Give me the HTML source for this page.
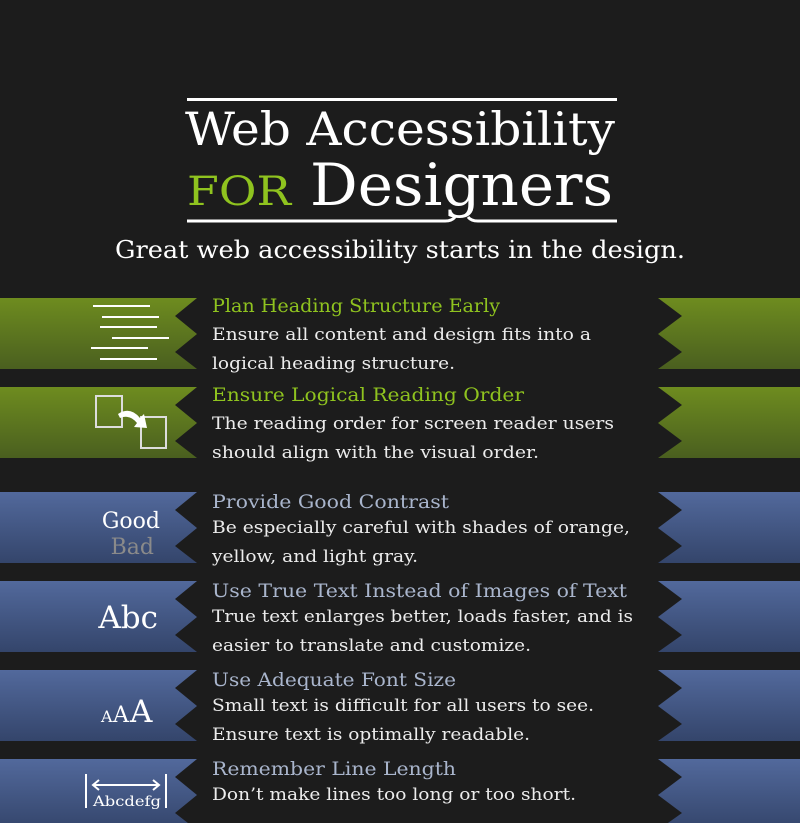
<!DOCTYPE html>
<html><head><meta charset="utf-8"><style>
html,body{margin:0;padding:0;background:#1c1c1c;}
svg{display:block;}
text{font-family:"DejaVu Serif","Liberation Serif",serif;}
.t{font-family:"Liberation Serif",serif;}
</style></head><body>
<svg width="800" height="823" viewBox="0 0 800 823" xmlns="http://www.w3.org/2000/svg">
<defs>
<linearGradient id="g" x1="0" y1="0" x2="0" y2="1"><stop offset="0" stop-color="#6e8c1f"/><stop offset="1" stop-color="#4a5f1f"/></linearGradient>
<linearGradient id="b" x1="0" y1="0" x2="0" y2="1"><stop offset="0" stop-color="#52699c"/><stop offset="1" stop-color="#34456b"/></linearGradient>
</defs>
<rect width="800" height="823" fill="#1c1c1c"/>

<!-- title -->
<rect x="187" y="98" width="430" height="3" fill="#fff"/>
<text x="185" y="145" font-size="46" fill="#fff" textLength="430" lengthAdjust="spacingAndGlyphs">Web Accessibility</text>
<text x="187" y="205" font-size="40" fill="#8fc31f" textLength="104" lengthAdjust="spacingAndGlyphs">FOR</text>
<text x="310" y="205" font-size="58" fill="#fff" textLength="303" lengthAdjust="spacingAndGlyphs">Designers</text>
<path d="M187 221 H445 Q452 221 455 217 M468 217 Q471 221 478 221 H617" stroke="#fff" stroke-width="3" fill="none"/>
<text x="115" y="258" font-size="24" fill="#fff" textLength="570" lengthAdjust="spacingAndGlyphs">Great web accessibility starts in the design.</text>

<!-- ribbons -->
<polygon points="0,298 197,298 175,316 197,334 175,352 197,369 0,369" fill="url(#g)"/>
<polygon points="658,298 800,298 800,369 658,369 682,352 658,334 682,316" fill="url(#g)"/>
<polygon points="0,387 197,387 175,405 197,423 175,441 197,458 0,458" fill="url(#g)"/>
<polygon points="658,387 800,387 800,458 658,458 682,441 658,423 682,405" fill="url(#g)"/>
<polygon points="0,492 197,492 175,510 197,528 175,546 197,563 0,563" fill="url(#b)"/>
<polygon points="658,492 800,492 800,563 658,563 682,546 658,528 682,510" fill="url(#b)"/>
<polygon points="0,581 197,581 175,599 197,617 175,635 197,652 0,652" fill="url(#b)"/>
<polygon points="658,581 800,581 800,652 658,652 682,635 658,617 682,599" fill="url(#b)"/>
<polygon points="0,670 197,670 175,688 197,706 175,724 197,741 0,741" fill="url(#b)"/>
<polygon points="658,670 800,670 800,741 658,741 682,724 658,706 682,688" fill="url(#b)"/>
<polygon points="0,759 197,759 175,777 197,795 175,813 197,830 0,830" fill="url(#b)"/>
<polygon points="658,759 800,759 800,830 658,830 682,813 658,795 682,777" fill="url(#b)"/>

<!-- icons -->
<g stroke="#fff" stroke-width="2">
<line x1="93" y1="306" x2="150" y2="306"/>
<line x1="102" y1="317" x2="159" y2="317"/>
<line x1="100" y1="327" x2="157" y2="327"/>
<line x1="112" y1="338" x2="169" y2="338"/>
<line x1="91" y1="348" x2="148" y2="348"/>
<line x1="100" y1="359" x2="157" y2="359"/>
</g>
<rect x="96" y="396" width="26" height="31" fill="none" stroke="#ddd" stroke-width="2"/>
<rect x="141" y="417" width="25" height="31" fill="none" stroke="#ddd" stroke-width="2"/>
<path d="M118 414 Q130 406 140 418 L144 414 L147 428 L134 427 L137 423 Q130 414 120 418 Z" fill="#fff"/>
<text x="160" y="528" font-size="22" fill="#fff" text-anchor="end">Good</text>
<text x="154" y="554" font-size="22" fill="#8a8a8a" text-anchor="end">Bad</text>
<text x="158" y="628" font-size="31" fill="#fff" text-anchor="end">Abc</text>
<text x="101" y="722" font-size="16" fill="#fff">A</text>
<text x="113" y="722" font-size="22" fill="#fff">A</text>
<text x="130" y="722" font-size="31" fill="#fff">A</text>
<g stroke="#fff" stroke-width="2" fill="none">
<line x1="86" y1="774" x2="86" y2="808"/>
<line x1="166" y1="774" x2="166" y2="808"/>
<line x1="93" y1="785" x2="159" y2="785"/>
<path d="M99 780 L93 785 L99 790 M153 780 L159 785 L153 790"/>
</g>
<text x="93" y="806" font-size="14" fill="#fff" textLength="68" lengthAdjust="spacingAndGlyphs">Abcdefg</text>

<!-- text -->
<g font-size="19" fill="#8fc31f">
<text x="212" y="312" textLength="288" lengthAdjust="spacingAndGlyphs">Plan Heading Structure Early</text>
<text x="212" y="401" textLength="312" lengthAdjust="spacingAndGlyphs">Ensure Logical Reading Order</text>
</g>
<g font-size="19" fill="#a9b5cc">
<text x="212" y="508" textLength="237" lengthAdjust="spacingAndGlyphs">Provide Good Contrast</text>
<text x="212" y="597" textLength="415" lengthAdjust="spacingAndGlyphs">Use True Text Instead of Images of Text</text>
<text x="212" y="686" textLength="244" lengthAdjust="spacingAndGlyphs">Use Adequate Font Size</text>
<text x="212" y="775" textLength="244" lengthAdjust="spacingAndGlyphs">Remember Line Length</text>
</g>
<g font-size="17" fill="#ececec">
<text x="212" y="340" textLength="379" lengthAdjust="spacingAndGlyphs">Ensure all content and design fits into a</text>
<text x="212" y="369" textLength="243" lengthAdjust="spacingAndGlyphs">logical heading structure.</text>
<text x="212" y="429" textLength="402" lengthAdjust="spacingAndGlyphs">The reading order for screen reader users</text>
<text x="212" y="458" textLength="327" lengthAdjust="spacingAndGlyphs">should align with the visual order.</text>
<text x="212" y="533" textLength="418" lengthAdjust="spacingAndGlyphs">Be especially careful with shades of orange,</text>
<text x="212" y="562" textLength="206" lengthAdjust="spacingAndGlyphs">yellow, and light gray.</text>
<text x="212" y="622" textLength="421" lengthAdjust="spacingAndGlyphs">True text enlarges better, loads faster, and is</text>
<text x="212" y="651" textLength="319" lengthAdjust="spacingAndGlyphs">easier to translate and customize.</text>
<text x="212" y="711" textLength="382" lengthAdjust="spacingAndGlyphs">Small text is difficult for all users to see.</text>
<text x="212" y="740" textLength="318" lengthAdjust="spacingAndGlyphs">Ensure text is optimally readable.</text>
<text x="212" y="800" textLength="364" lengthAdjust="spacingAndGlyphs">Don’t make lines too long or too short.</text>
</g>
</svg>
</body></html>
